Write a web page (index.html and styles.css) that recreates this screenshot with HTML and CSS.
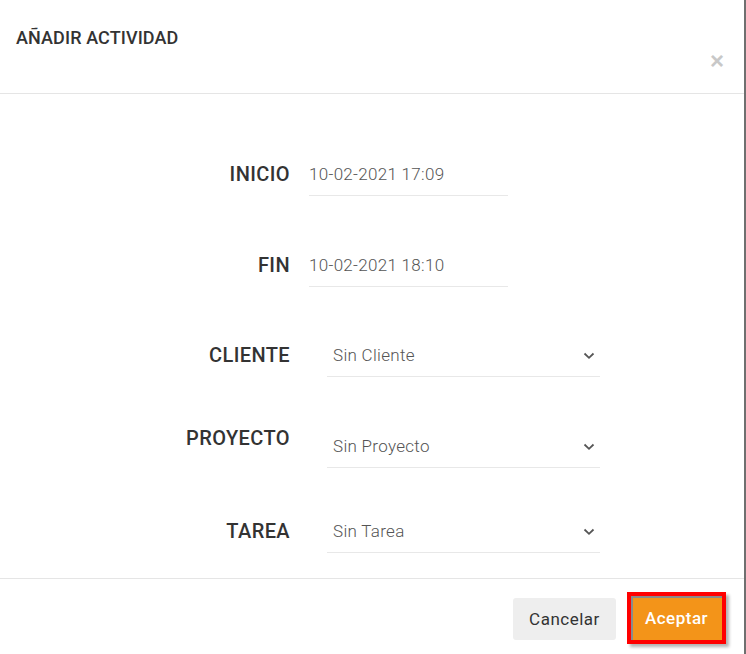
FILE: index.html
```html
<!DOCTYPE html>
<html lang="es">
<head>
<meta charset="utf-8">
<title>Añadir actividad</title>
<link rel="stylesheet" href="styles.css">
</head>
<body>
<div class="modal">
  <div class="modal-header">
    <h4 class="modal-title">AÑADIR ACTIVIDAD</h4>
    <button class="close" type="button">×</button>
  </div>
  <div class="modal-body">
    <div class="row r1">
      <label class="lbl">INICIO</label>
      <div class="field date">10-02-2021 17:09</div>
    </div>
    <div class="row r2">
      <label class="lbl">FIN</label>
      <div class="field date">10-02-2021 18:10</div>
    </div>
    <div class="row r3">
      <label class="lbl">CLIENTE</label>
      <div class="field select"><span>Sin Cliente</span><svg class="chev" width="12" height="8" viewBox="0 0 12 8"><path d="M1.5 1.5 L6 5.8 L10.5 1.5" fill="none" stroke="#555" stroke-width="1.8"/></svg></div>
    </div>
    <div class="row r4">
      <label class="lbl top">PROYECTO</label>
      <div class="field select"><span>Sin Proyecto</span><svg class="chev" width="12" height="8" viewBox="0 0 12 8"><path d="M1.5 1.5 L6 5.8 L10.5 1.5" fill="none" stroke="#555" stroke-width="1.8"/></svg></div>
    </div>
    <div class="row r5">
      <label class="lbl">TAREA</label>
      <div class="field select"><span>Sin Tarea</span><svg class="chev" width="12" height="8" viewBox="0 0 12 8"><path d="M1.5 1.5 L6 5.8 L10.5 1.5" fill="none" stroke="#555" stroke-width="1.8"/></svg></div>
    </div>
  </div>
  <div class="modal-footer">
    <button class="btn btn-cancel" type="button">Cancelar</button>
    <button class="btn btn-ok" type="button">Aceptar</button>
  </div>
</div>
</body>
</html>
```

FILE: styles.css
```css
html, body {
  margin: 0;
  padding: 0;
  background: #fff;
}
body {
  font-family: Roboto, "Open Sans", "Liberation Sans", sans-serif;
  color: #333;
}
.modal {
  width: 744px;
  height: 654px;
  border-right: 2px solid #6f6f6f;
  display: flex;
  flex-direction: column;
}
.modal-header {
  height: 94px;
  border-bottom: 1px solid #e5e5e5;
  display: flex;
  justify-content: space-between;
  align-items: flex-start;
  box-sizing: border-box;
  flex: none;
}
.modal-title {
  margin: 28px 0 0 16px;
  font-size: 18px;
  font-weight: 500;
  line-height: 20px;
  color: #333;
  letter-spacing: 0.1px;
}
.close {
  margin: 49px 20px 0 0;
  padding: 0;
  border: 0;
  background: none;
  font-family: "Liberation Sans", Arial, sans-serif;
  font-size: 24px;
  font-weight: bold;
  line-height: 24px;
  color: #c8c8c8;
}
.modal-body {
  height: 485px;
  flex: none;
  padding-top: 61px;
  box-sizing: border-box;
  border-bottom: 1px solid #e5e5e5;
}
.row {
  display: flex;
  align-items: flex-start;
}
.r2 { margin-top: 50px; }
.r3 { margin-top: 49px; }
.r4 { margin-top: 50px; }
.r5 { margin-top: 44px; }
.lbl {
  width: 290px;
  text-align: right;
  font-size: 20px;
  font-weight: 500;
  line-height: 22px;
  padding-top: 8px;
  color: #333;
  letter-spacing: 0.4px;
}
.lbl.top {
  padding-top: 0;
}
.field {
  border-bottom: 1px solid #e8e8e8;
  font-size: 17px;
  font-weight: 300;
  color: #555;
  line-height: 22px;
  padding-top: 8px;
  box-sizing: border-box;
  height: 41px;
  letter-spacing: 0.3px;
}
.date {
  margin-left: 19px;
  width: 199px;
}
.select {
  margin-left: 37px;
  width: 273px;
  padding-left: 6px;
  padding-right: 5px;
  display: flex;
  justify-content: space-between;
  align-items: flex-start;
}
.chev {
  margin-top: 8px;
}
.modal-footer {
  flex: 1;
  display: flex;
  justify-content: flex-end;
  align-items: flex-start;
  padding: 13px 18px 0 0;
  gap: 11px;
}
.btn {
  font-family: Roboto, "Open Sans", "Liberation Sans", sans-serif;
  font-size: 17px;
  border: 0;
  cursor: pointer;
  letter-spacing: 0.5px;
}
.btn-cancel {
  margin-top: 6px;
  width: 103px;
  height: 42px;
  background: #eeeeee;
  color: #333;
  border-radius: 3px;
}
.btn-ok {
  width: 99px;
  height: 52px;
  background: #f39419;
  color: #fff;
  font-weight: 500;
  border: 4px solid #ff0000;
  box-shadow: inset 2px 2px 0 #8a8a8a, 3px 3px 3px rgba(0, 0, 0, 0.3);
}
```
